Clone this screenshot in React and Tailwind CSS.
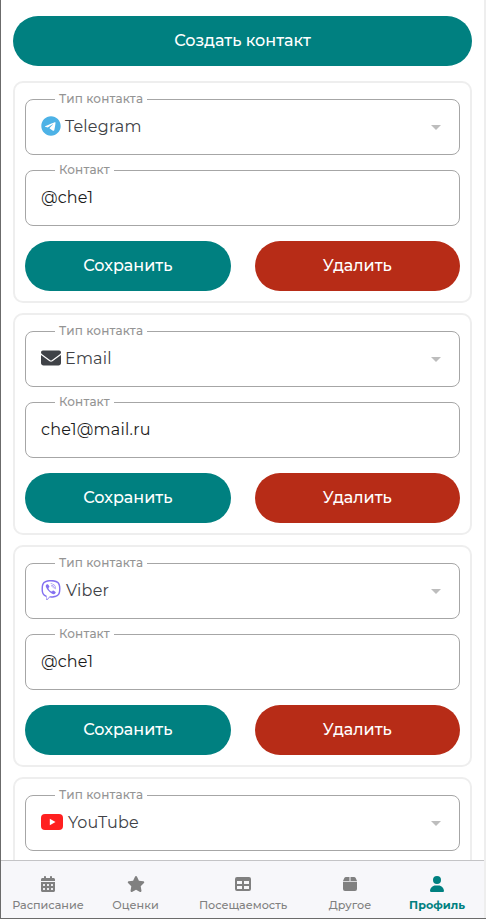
import React from 'react';
import { FaEnvelope, FaTelegram, FaViber, FaCalendarDays, FaStar, FaUser } from 'react-icons/fa6';

function YoutubeIcon() {
  return (
    <svg width="22" height="16" viewBox="0 0 22 16">
      <rect width="22" height="16" rx="4" fill="#ff2020" />
      <path d="M8.8 4.8L14.5 8L8.8 11.2Z" fill="#fff" />
    </svg>
  );
}

function TableIcon() {
  return (
    <svg width="16" height="14" viewBox="0 0 16 14">
      <path
        fillRule="evenodd"
        fill="currentColor"
        d="M2 0H14A2 2 0 0 1 16 2V12A2 2 0 0 1 14 14H2A2 2 0 0 1 0 12V2A2 2 0 0 1 2 0ZM2 4V7H7V4ZM9 4V7H14V4ZM2 9V12H7V9ZM9 9V12H14V9Z"
      />
    </svg>
  );
}

function BoxIcon() {
  return (
    <svg width="14" height="14" viewBox="0 0 14 14">
      <path fill="currentColor" opacity="0.5" d="M6 0H8V4H6Z" />
      <path
        fill="currentColor"
        d="M3 0H6V4H0L1.3 1.1A2 2 0 0 1 3 0ZM8 0H11A2 2 0 0 1 12.7 1.1L14 4H8ZM0 4.8H14V12A2 2 0 0 1 12 14H2A2 2 0 0 1 0 12Z"
      />
    </svg>
  );
}

function Field({ label, labelClass, children }) {
  return (
    <div className="relative flex h-14 items-center rounded-lg border border-[#a6a6a6] px-[15px]">
      <span className={`absolute -top-[9px] left-[29px] flex h-4 items-center whitespace-nowrap bg-white pl-1 text-[12px] font-medium tracking-[0.12px] text-[#949494] ${labelClass}`}>
        {label}
      </span>
      {children}
    </div>
  );
}

function Card({ icon, type, typeClass, value, valueClass }) {
  return (
    <section className="h-[222px] shrink-0 rounded-[10px] border-2 border-[#eeeeee] px-[10px] pt-4">
      <Field label="Тип контакта" labelClass="w-[92px]">
        <span className="mb-0.5">{icon}</span>
        <span className={`text-[16px] leading-6 text-[#404246] ${typeClass}`}>{type}</span>
        <span className="ml-auto mr-[3px] border-x-[5px] border-t-[5px] border-x-transparent border-t-[#bdbdbd]" />
      </Field>
      <div className="mt-[15px]">
        <Field label="Контакт" labelClass="w-[59px]">
          <span className={`text-[16px] leading-6 text-[#1c1c1c] ${valueClass}`}>{value}</span>
        </Field>
      </div>
      <div className="mt-[15px] grid grid-cols-2 gap-6">
        <button className="h-[50px] rounded-full bg-[#008080] text-[16px] font-medium text-white">Сохранить</button>
        <button className="h-[50px] rounded-full bg-[#b72c17] text-[16px] font-medium text-white">Удалить</button>
      </div>
    </section>
  );
}

const contacts = [
  { type: 'Telegram', typeClass: 'ml-1 tracking-[0.2px]', value: '@che1', valueClass: 'tracking-[0.2px]', icon: <FaTelegram size={20} color="#4db2e6" /> },
  { type: 'Email', typeClass: 'ml-1 tracking-[0.2px]', value: 'che1@mail.ru', valueClass: 'tracking-[0.25px]', icon: <FaEnvelope size={20} color="#3f4247" /> },
  { type: 'Viber', typeClass: 'ml-[5px] tracking-[0.2px]', value: '@che1', valueClass: 'tracking-[0.2px]', icon: <FaViber size={20} color="#8370f0" /> },
  { type: 'YouTube', typeClass: 'ml-[5px] tracking-[0.15px]', value: '@che1', valueClass: 'tracking-[0.2px]', icon: <YoutubeIcon /> },
];

const tabs = [
  { label: 'Расписание', icon: <FaCalendarDays size={16} />, cls: 'w-[94px] font-medium text-[#808080]' },
  { label: 'Оценки', icon: <FaStar size={18} />, cls: 'w-[81px] font-medium text-[#808080]' },
  { label: 'Посещаемость', icon: <TableIcon />, cls: 'w-[134px] font-medium text-[#808080]' },
  { label: 'Другое', icon: <BoxIcon />, cls: 'w-[80px] font-medium text-[#808080]' },
  { label: 'Профиль', icon: <FaUser size={16} />, cls: 'w-[94px] font-bold text-[#008080]' },
];

export default function App() {
  return (
    <div className="flex h-[919px] w-[486px] flex-col overflow-hidden border-b border-l border-[#6b6b6b] bg-white font-['Montserrat',Inter,sans-serif]">
      <div className="flex min-h-0 flex-1 border-r-2 border-r-[#eeeeee]">
        <div className="flex min-w-0 flex-1 flex-col">
          <main className="flex min-h-0 flex-1 flex-col gap-[10px] overflow-hidden pl-3 pr-3 pt-4">
            <button className="mb-[5px] h-[50px] shrink-0 rounded-full bg-[#008080] text-[16px] font-medium text-white">Создать контакт</button>
            {contacts.map((c) => (
              <Card key={c.type} {...c} />
            ))}
          </main>
          <nav className="flex h-[58px] shrink-0 border-t border-[#c4c4c6] bg-[#f7f7fa]">
            {tabs.map((t) => (
              <a key={t.label} className={`flex flex-col items-center pt-[15px] text-[11.2px] leading-4 ${t.cls}`}>
                <span className="flex h-4 items-center justify-center">{t.icon}</span>
                <span className="mt-[5px]">{t.label}</span>
              </a>
            ))}
          </nav>
        </div>
      </div>
    </div>
  );
}
